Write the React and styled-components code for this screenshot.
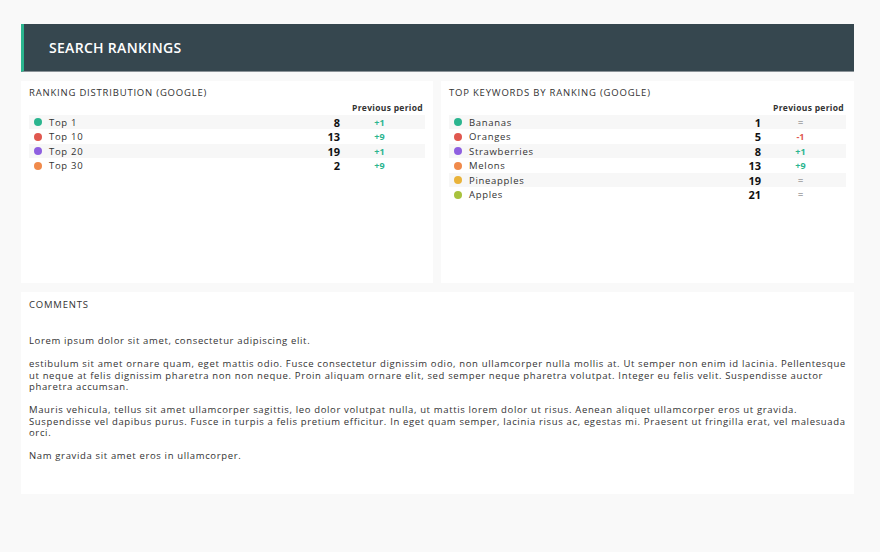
import React from "react";
import styled, { createGlobalStyle } from "styled-components";

const Global = createGlobalStyle`
  body { margin: 0; background: #f9f9f9; font-family: "Open Sans", "Liberation Sans", sans-serif; color: #333; }
`;
const Page = styled.div`
  padding: 24px 26px 0 21px; display: flex; flex-direction: column; gap: 9px;
`;
const Header = styled.div`
  height: 48px; background: #36474f; border-left: 3px solid #2bb58f; border-bottom: 1px solid #8a9297;
  box-sizing: border-box; display: flex; align-items: center; padding-left: 25px;
  color: #fff; font-size: 14px; font-weight: 600; letter-spacing: 0.3px;
`;
const Row2 = styled.div` display: grid; grid-template-columns: 412px 413px; gap: 8px; `;
const Panel = styled.div`
  background: #fff; height: ${p => p.h}px; padding: 5px 8px; box-sizing: border-box;
`;
const Title = styled.div` font-size: 9.5px; letter-spacing: 0.8px; color: #333; `;
const Table = styled.div` margin-top: 1px; `;
const TRow = styled.div`
  display: grid; grid-template-columns: 1fr 28px 85px; align-items: center; height: 14.5px;
  font-size: 9.5px; background: ${p => (p.striped ? "#f7f7f7" : "transparent")};
`;
const HeadCell = styled.div` grid-column: 3; text-align: right; font-weight: 700; font-size: 8.5px; padding-right: 2px; letter-spacing: 0.3px; `;
const Label = styled.div` display: flex; align-items: center; gap: 7px; padding-left: 5px; letter-spacing: 0.7px; `;
const Dot = styled.span` width: 8px; height: 8px; border-radius: 50%; background: ${p => p.c}; `;
const Val = styled.div` text-align: right; font-weight: 700; font-size: 11px; color: #111; `;
const Diff = styled.div`
  text-align: center; font-weight: 700; font-size: 9px; padding-right: 6px;
  color: ${p => (p.v.startsWith("+") ? "#2bb58f" : p.v.startsWith("-") ? "#e0584f" : "#aaa")};
`;
const Comments = styled.div`
  background: #fff; height: 202px; padding: 6px 8px; box-sizing: border-box;
`;
const Body = styled.div` margin-top: 24px; font-size: 9.5px; line-height: 11.5px; letter-spacing: 0.65px; color: #333;
  p { margin: 0 0 11.5px; }
`;

const C = { g: "#2bb58f", r: "#e0584f", p: "#8e5fe0", o: "#f08a4b", y: "#e9b33a", l: "#a8c23d" };

function Rankings({ title, rows, h }) {
  return (
    <Panel h={h}>
      <Title>{title}</Title>
      <Table>
        <TRow><HeadCell>Previous period</HeadCell></TRow>
        {rows.map((r, i) => (
          <TRow key={r[0]} striped={i % 2 === 0}>
            <Label><Dot c={r[1]} />{r[0]}</Label>
            <Val>{r[2]}</Val>
            <Diff v={r[3]}>{r[3]}</Diff>
          </TRow>
        ))}
      </Table>
    </Panel>
  );
}

export default function App() {
  return (
    <>
      <Global />
      <Page>
        <Header>SEARCH RANKINGS</Header>
        <Row2>
          <Rankings h={202} title="RANKING DISTRIBUTION (GOOGLE)" rows={[
            ["Top 1", C.g, "8", "+1"], ["Top 10", C.r, "13", "+9"], ["Top 20", C.p, "19", "+1"], ["Top 30", C.o, "2", "+9"],
          ]} />
          <Rankings h={202} title="TOP KEYWORDS BY RANKING (GOOGLE)" rows={[
            ["Bananas", C.g, "1", "="], ["Oranges", C.r, "5", "-1"], ["Strawberries", C.p, "8", "+1"],
            ["Melons", C.o, "13", "+9"], ["Pineapples", C.y, "19", "="], ["Apples", C.l, "21", "="],
          ]} />
        </Row2>
        <Comments>
          <Title>COMMENTS</Title>
          <Body>
            <p>Lorem ipsum dolor sit amet, consectetur adipiscing elit.</p>
            <p>estibulum sit amet ornare quam, eget mattis odio. Fusce consectetur dignissim odio, non ullamcorper nulla mollis at. Ut semper non enim id lacinia. Pellentesque ut neque at felis dignissim pharetra non non neque. Proin aliquam ornare elit, sed semper neque pharetra volutpat. Integer eu felis velit. Suspendisse auctor pharetra accumsan.</p>
            <p>Mauris vehicula, tellus sit amet ullamcorper sagittis, leo dolor volutpat nulla, ut mattis lorem dolor ut risus. Aenean aliquet ullamcorper eros ut gravida. Suspendisse vel dapibus purus. Fusce in turpis a felis pretium efficitur. In eget quam semper, lacinia risus ac, egestas mi. Praesent ut fringilla erat, vel malesuada orci.</p>
            <p>Nam gravida sit amet eros in ullamcorper.</p>
          </Body>
        </Comments>
      </Page>
    </>
  );
}
